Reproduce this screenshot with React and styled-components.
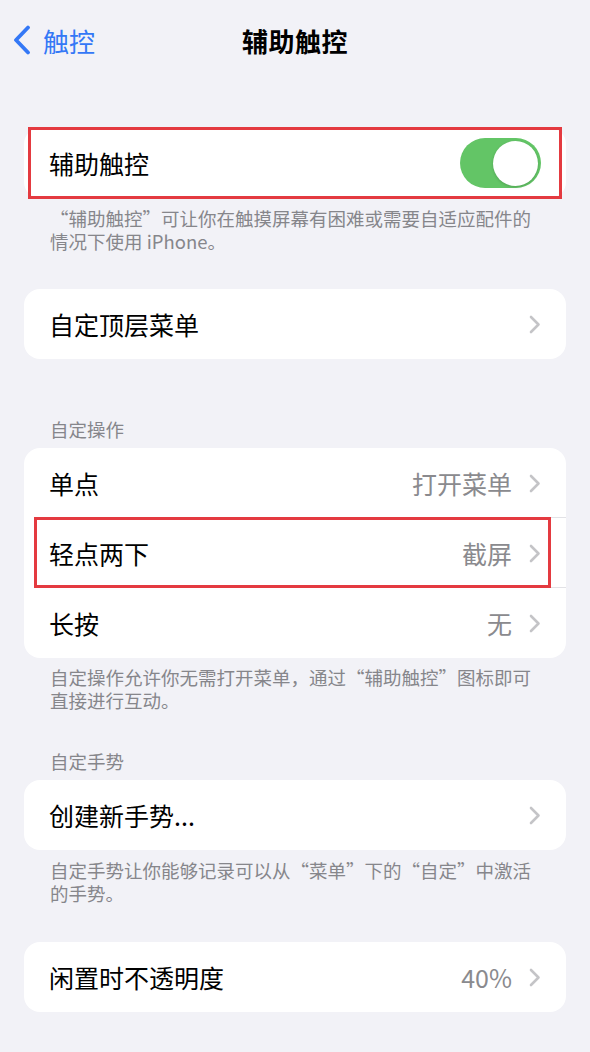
import React from "react";
import styled, { createGlobalStyle } from "styled-components";

const Global = createGlobalStyle`
  html, body { margin: 0; padding: 0; background: #f2f2f7; }
  body { font-family: "Noto Sans CJK SC", "Noto Sans", sans-serif; -webkit-font-smoothing: antialiased; }
  * { box-sizing: border-box; }
`;

const Page = styled.div`
  width: 590px;
  min-height: 1052px;
  background: #f2f2f7;
  padding: 0 24px 40px;
`;

const NavBar = styled.div`
  position: relative;
  height: 80px;
  display: flex;
  align-items: center;
  justify-content: center;
  margin: 0 -24px;
`;

const Back = styled.div`
  position: absolute;
  left: 13px;
  top: 0;
  bottom: 0;
  display: flex;
  align-items: center;
  gap: 12px;
  color: #3478f6;
  font-size: 26px;
`;

const Title = styled.div`
  font-size: 26px;
  font-weight: 700;
  color: #000;
  letter-spacing: 0.5px;
`;

const Group = styled.section`
  margin-top: ${(p) => p.$mt}px;
`;

const Header = styled.div`
  font-size: 18.5px;
  line-height: 23px;
  color: #86868b;
  padding: 0 26px 7px;
`;

const Card = styled.div`
  position: relative;
  background: #fff;
  border-radius: 16px;
`;

const Row = styled.div`
  position: relative;
  height: 70px;
  display: flex;
  align-items: center;
  padding: 0 25px 0 25px;
  &:not(:last-child)::after {
    content: "";
    position: absolute;
    left: 26px;
    right: 0;
    bottom: 0;
    height: 1px;
    background: #e2e2e6;
  }
`;

const Label = styled.div`
  flex: 1;
  font-size: 25px;
  color: #000;
`;

const Value = styled.div`
  font-size: 25px;
  color: #8a8a8e;
  margin-right: 17px;
`;

const Footer = styled.div`
  font-size: 18.5px;
  line-height: 23px;
  color: #86868b;
  padding: ${(p) => p.$pt}px 26px 0;
`;

const Highlight = styled.div`
  position: absolute;
  left: ${(p) => p.$l}px;
  right: ${(p) => p.$r}px;
  top: ${(p) => p.$t}px;
  bottom: ${(p) => p.$b}px;
  border: 3px solid #e43a40;
  pointer-events: none;
  z-index: 2;
`;

const Toggle = styled.div`
  position: relative;
  width: 81px;
  height: 50px;
  border-radius: 25px;
  background: #63c566;
`;

const Knob = styled.div`
  position: absolute;
  right: 3px;
  top: 2.5px;
  width: 45px;
  height: 45px;
  border-radius: 50%;
  background: #fff;
  box-shadow: 0 1px 3px rgba(0, 0, 0, 0.18);
`;

const Chevron = () => (
  <svg width="12" height="19" viewBox="0 0 12 19" fill="none">
    <path d="M2 2 L9.5 9.5 L2 17" stroke="#c4c4c7" strokeWidth="2.6" strokeLinecap="round" strokeLinejoin="round" />
  </svg>
);

const BackChevron = () => (
  <svg width="18" height="30" viewBox="0 0 18 30" fill="none">
    <path d="M15 2.5 L3 15 L15 27.5" stroke="#3478f6" strokeWidth="3.8" strokeLinecap="round" strokeLinejoin="round" />
  </svg>
);

const LinkRow = ({ label, value }) => (
  <Row>
    <Label>{label}</Label>
    {value && <Value>{value}</Value>}
    <Chevron />
  </Row>
);

export default function App() {
  return (
    <>
      <Global />
      <Page>
        <NavBar>
          <Back>
            <BackChevron />
            <span>触控</span>
          </Back>
          <Title>辅助触控</Title>
        </NavBar>

        <Group $mt={48}>
          <Card>
            <Highlight $l={4} $r={4} $t={-1} $b={-1} />
            <Row>
              <Label>辅助触控</Label>
              <Toggle>
                <Knob />
              </Toggle>
            </Row>
          </Card>
          <Footer $pt={9}>
            “辅助触控”可让你在触摸屏幕有困难或需要自适应配件的情况下使用 iPhone。
          </Footer>
        </Group>

        <Group $mt={36}>
          <Card>
            <LinkRow label="自定顶层菜单" />
          </Card>
        </Group>

        <Group $mt={59}>
          <Header>自定操作</Header>
          <Card>
            <LinkRow label="单点" value="打开菜单" />
            <Row>
              <Highlight $l={10} $r={15} $t={-1} $b={0} />
              <Label>轻点两下</Label>
              <Value>截屏</Value>
              <Chevron />
            </Row>
            <LinkRow label="长按" value="无" />
          </Card>
          <Footer $pt={8}>
            自定操作允许你无需打开菜单，通过“辅助触控”图标即可直接进行互动。
          </Footer>
        </Group>

        <Group $mt={38}>
          <Header>自定手势</Header>
          <Card>
            <LinkRow label="创建新手势..." />
          </Card>
          <Footer $pt={9}>
            自定手势让你能够记录可以从“菜单”下的“自定”中激活的手势。
          </Footer>
        </Group>

        <Group $mt={37}>
          <Card>
            <LinkRow label="闲置时不透明度" value="40%" />
          </Card>
        </Group>
      </Page>
    </>
  );
}
